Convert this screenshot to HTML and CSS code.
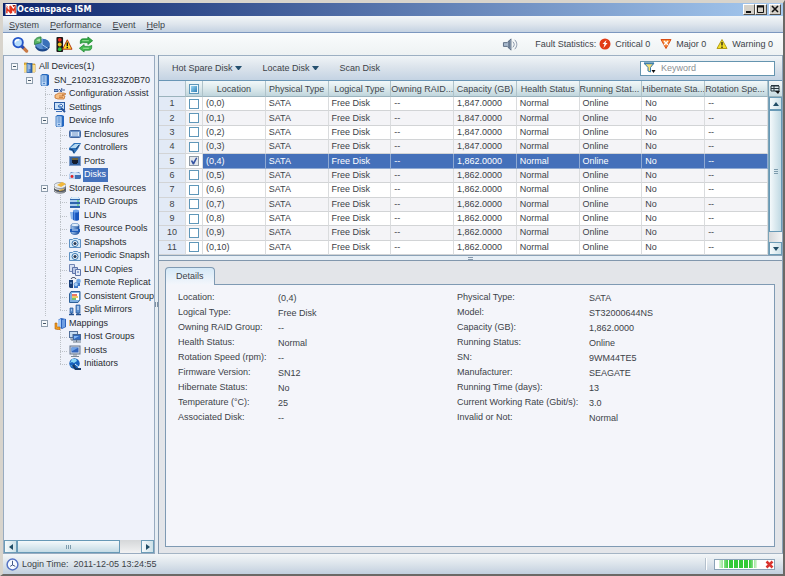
FILE: index.html
```html
<!DOCTYPE html>
<html lang="en">
<head>
<meta charset="utf-8">
<title>Oceanspace ISM</title>
<link rel="stylesheet" href="styles.css">
</head>
<body>
<svg class="sprite" aria-hidden="true">
  <defs>
    <linearGradient id="blue" x1="0" x2="1"><stop offset="0" stop-color="#a9cdf5"/><stop offset="1" stop-color="#1c4f9e"/></linearGradient>
    <linearGradient id="steel" x1="0" x2="1"><stop offset="0" stop-color="#fff"/><stop offset="1" stop-color="#7b8087"/></linearGradient>
  </defs>
  <symbol id="i-all" viewBox="0 0 12 12"><path d="M0 2h4l1 1h6v8H0z" fill="#f2c24d" stroke="#b98518" stroke-width=".7"/><path d="M0 4h11v7H0z" fill="#f9de8b"/><rect x="3" y="2.500" width="5" height="9" fill="url(#blue)" stroke="#2863ae" stroke-width=".8"/><path d="M4.500 5h2M4.500 7h2" stroke="#fff" stroke-width=".8"/></symbol>
  <symbol id="i-server" viewBox="0 0 12 12"><path d="M3 0h5l2 1v10l-2 1H3z" fill="#2467c2"/><path d="M2 1h6v11H3L2 11z" fill="#b9d5f5" stroke="#2a69b9" stroke-width=".8"/><path d="M3.500 3h3M3.500 5h3M3.500 7h3" stroke="#2a69b9" stroke-width=".8"/><circle cx="5" cy="9.500" r=".8" fill="#2a69b9"/></symbol>
  <symbol id="i-assist" viewBox="0 0 12 12"><path d="M0 1.500h4v2H0zM7 2h4M5 1l3 3M8 0l-2 4" fill="#9ab7df" stroke="#3c5e9c"/><path d="M1 7l4-2h5l2 1-4 1 3 1-1 3H4L1 10z" fill="#f7bf85" stroke="#bb651e" stroke-width=".7"/><path d="M5 8h4M5 9.500h4" stroke="#bb651e" stroke-width=".6"/></symbol>
  <symbol id="i-settings" viewBox="0 0 12 12"><rect x=".5" y="1.500" width="10" height="7" fill="#c7dff8" stroke="#285ba4"/><path d="M2 10.500h6M4 5l3-2 2 2-3 2z" fill="#fff" stroke="#3b6fb7"/><path d="M7 7l4 4" stroke="#25529b" stroke-width="2"/><circle cx="6" cy="6" r="1.500" fill="#5a91d1"/></symbol>
  <symbol id="i-enclosure" viewBox="0 0 12 12"><rect x=".5" y="2.500" width="11" height="7" rx="1" fill="#6f96cb" stroke="#41659f"/><rect x="2" y="4" width="8" height="4" fill="#dceafa"/><path d="M4 4v4M6 4v4M8 4v4" stroke="#7d9dca"/></symbol>
  <symbol id="i-controller" viewBox="0 0 12 12"><path d="M0 6l5-5 7 0-3 6-4 5-2-3-3-1z" fill="#2c71b9"/><path d="M1 6l5-4 5 0-4 4z" fill="#b4d9f3"/><path d="M1 7l3 1 1 3M7 7l3-4" fill="none" stroke="#163e76"/></symbol>
  <symbol id="i-port" viewBox="0 0 12 12"><rect x=".5" y="1.500" width="11" height="9" fill="#3563a3" stroke="#7d9bc6"/><path d="M3 3h6v5H8v1H4V8H3z" fill="#141c2d"/><path d="M4 3v2M6 3v2M8 3v2" stroke="#f0ce58" stroke-width=".8"/></symbol>
  <symbol id="i-disk" viewBox="0 0 12 12"><path d="M0 6l2-3h8l2 3v3l-1 1H1L0 9z" fill="#3f70b5"/><path d="M0 6c1-4 11-4 12 0z" fill="#d3e4f8"/><path d="M0 6h6v4H1L0 9z" fill="#b9d0ee"/><circle cx="3" cy="7.500" r="1.400" fill="#e51f24"/></symbol>
  <symbol id="i-storage" viewBox="0 0 12 12"><path d="M0 4v5c2 3 10 3 12 0V4z" fill="url(#steel)" stroke="#555b63" stroke-width=".7"/><path d="M0 6c3 3 9 3 12 0v2c-3 3-9 3-12 0z" fill="#555a61"/><ellipse cx="6" cy="3.500" rx="6" ry="3" fill="#e8edf2" stroke="#6f757d" stroke-width=".6"/><path d="M3 3l5-3 4 2-5 3z" fill="#f1b83b"/><path d="M5 8l5-1v1L5 9z" fill="#efb638"/></symbol>
  <symbol id="i-raid" viewBox="0 0 12 12"><path d="M1 3l2-2h6l2 2v9H1z" fill="#2d65ad"/><path d="M1 3l2-2h6l2 2z" fill="#d6eafa"/><path d="M1 4h10v2H1zM1 8h10v2H1z" fill="#a9cdef"/><path d="M8 5h2M8 9h2" stroke="#44d14c"/></symbol>
  <symbol id="i-lun" viewBox="0 0 12 12"><path d="M1 3h4v8l-3-1z" fill="#8db8eb"/><path d="M4 2v9c2 1 5 1 6 0V2z" fill="#1655bd"/><path d="M5.500 3v8" stroke="#4d89e0" stroke-width="1.500"/><ellipse cx="7" cy="2" rx="3" ry="1.500" fill="#6ca2e8"/></symbol>
  <symbol id="i-pool" viewBox="0 0 12 12"><path d="M2 2v8c2 2 6 2 8 0V2z" fill="url(#blue)" stroke="#2758a0" stroke-width=".7"/><ellipse cx="6" cy="2" rx="4" ry="1.600" fill="#e2effc" stroke="#4477b7" stroke-width=".6"/><path d="M1 6h10v3H1z" fill="#1e5cb9"/><path d="M3 7h6" stroke="#d7e8fc"/></symbol>
  <symbol id="i-snap" viewBox="0 0 12 12"><path d="M.5 2.500h3l1-1h4l1 1h2v8H.5z" fill="#d3e9f9" stroke="#5c90c3"/><circle cx="6" cy="6.500" r="3" fill="#fff" stroke="#3374ae"/><circle cx="6" cy="6.500" r="1.600" fill="#253a56"/></symbol>
  <symbol id="i-copy" viewBox="0 0 12 12"><path d="M.5.500h5v7h-5z" fill="#d6dff2" stroke="#7286b5"/><path d="M3.500 3.500h5v6h-5z" fill="#b9c7e6" stroke="#5d73a8"/><path d="M6.500 5.500h5v6h-5z" fill="#e5ebf8" stroke="#5d73a8"/><path d="M8 8h2" stroke="#4669aa"/></symbol>
  <symbol id="i-remote" viewBox="0 0 12 12"><path d="M0 3h4v8H1L0 10z" fill="#173e79"/><path d="M1 6h2" stroke="#95c4f5"/><path d="M2 2c1-2 4-2 5 0" fill="none" stroke="#222f4a"/><circle cx="9.500" cy="4" r="2.300" fill="#6da6e5"/><path d="M5 8h4v3H5zM9 6h2v3H9z" fill="#3e78c9"/><circle cx="7" cy="7.500" r="2" fill="#a4cff8" stroke="#3c76c2" stroke-width=".6"/></symbol>
  <symbol id="i-group" viewBox="0 0 12 12"><path d="M2 .5h9v8l-2 3H.5V3z" fill="#7eafe0" stroke="#2d6099"/><rect x="3" y="2" width="7" height="7" fill="#fff"/><path d="M3 4h5" stroke="#e34b35" stroke-width="1.500"/><path d="M3 6h6" stroke="#e9b72e" stroke-width="1.500"/><path d="M3 8h4" stroke="#46ae45" stroke-width="1.500"/></symbol>
  <symbol id="i-mirror" viewBox="0 0 12 12"><path d="M1 4h3v5H1zM7 1h4v8H7z" fill="#5f93d3" stroke="#275797" stroke-width=".7"/><path d="M8 3h2M8 5h2M2 6h1" stroke="#e6f2ff"/><path d="M0 10.500h5m2 0h5M2.500 9v2M9 9v2" stroke="#24518e" stroke-width="1.300"/></symbol>
  <symbol id="i-mapping" viewBox="0 0 12 12"><path d="M4 2l3-2 5 1v8l-4 2-4-2z" fill="#2a62bd"/><path d="M4 2l3-1v9L4 9z" fill="#a6cbf7"/><path d="M8 2l3-1v8L8 10z" fill="#6f9fe2"/><path d="M1 5h2v4h3v3l-5-1z" fill="#f09d20" stroke="#af5e08" stroke-width=".6"/></symbol>
  <symbol id="i-hosts" viewBox="0 0 12 12"><rect x=".5" y=".5" width="8" height="6" fill="#c6dcf2" stroke="#516f9a"/><rect x="4" y="3.500" width="7.500" height="5.500" fill="#326cc1" stroke="#45658f"/><path d="M5 5h5L5 8z" fill="#83b8f5"/><path d="M4 11h8M7.500 9v2M1 8h2v2" fill="none" stroke="#6b7887"/></symbol>
  <symbol id="i-host" viewBox="0 0 12 12"><rect x="1" y="1" width="10" height="8" fill="#d4dbe6" stroke="#64748d"/><rect x="2.500" y="2.500" width="7" height="5" fill="#3365bd"/><path d="M2.500 2.500h7l-7 4z" fill="#6fa2e6"/><path d="M4 10h4M2 11.500h8" stroke="#7c8795"/></symbol>
  <symbol id="i-initiator" viewBox="0 0 12 12"><circle cx="5.500" cy="5.500" r="5.200" fill="#1662be"/><path d="M3 1l4 0 1 2-3 2-2-1-2 1zM1 7l3 1 1 2z" fill="#8bd7f5"/><path d="M5 6l2 4h5v2H6L3 8z" fill="#173a66"/><path d="M6 6l5 4" stroke="#d9f3ff"/></symbol>
</svg>

<div class="window">
  <header class="titlebar">
    <svg class="logo" viewBox="0 0 12 12" aria-hidden="true"><path fill="#fff" d="M0 0h12v12H0z"/><path d="M1.500 10V5L5 9V2M6.500 10V4l2 3 2-3v6" fill="none" stroke="#e2341d" stroke-width="1.600"/><path d="M1 2l2 2M8 1l1 2 2-2" stroke="#e2341d"/></svg>
    <h1>Oceanspace ISM</h1>
    <div class="winbuttons">
      <button type="button" aria-label="Minimize"><svg viewBox="0 0 12 11"><path d="M3 8h5" stroke="#111" stroke-width="2"/></svg></button>
      <button type="button" aria-label="Maximize"><svg viewBox="0 0 12 11"><path d="M2.500 2v6.500h6V2M2 2h7" fill="none" stroke="#111"/><path d="M2 2.500h7" stroke="#111" stroke-width="2"/></svg></button>
      <button type="button" aria-label="Close"><svg viewBox="0 0 12 11"><path d="M3 2l6 6M9 2L3 8" stroke="#111" stroke-width="1.600"/></svg></button>
    </div>
  </header>

  <nav class="menubar">
    <button type="button"><u>S</u>ystem</button>
    <button type="button"><u>P</u>erformance</button>
    <button type="button"><u>E</u>vent</button>
    <button type="button"><u>H</u>elp</button>
  </nav>

  <div class="toolbar">
    <button type="button" aria-label="Discover"><svg viewBox="0 0 18 18"><path d="M10 10l6 6" stroke="#c97a45" stroke-width="3.500" stroke-linecap="round"/><path d="M10 10l3 3" stroke="#2a4bb0" stroke-width="3"/><circle cx="7" cy="7" r="5" fill="#b5dcfb" stroke="#2455c8" stroke-width="2"/><path d="M4 7c0-2 2-3 4-3" fill="none" stroke="#fff" stroke-width="1.500"/></svg></button>
    <button type="button" aria-label="Statistics"><svg viewBox="0 0 18 18"><path d="M2 8v4c2 6 13 6 15 0V8z" fill="#1b4689"/><ellipse cx="9.500" cy="8.500" rx="7.500" ry="5.500" fill="#5b90cf"/><path d="M9 9V3c5 0 8 3 8 5 0 4-4 6-7 6z" fill="#3a70b9"/><path d="M9 3v6l6 4" fill="none" stroke="#b5d7f5"/><path d="M1 6c0-3 3-5 7-5v6l-7 2z" fill="#56b365" stroke="#247839" stroke-width=".8"/><path d="M3 5c1-1 2-2 4-2v3z" fill="#a9dfa5"/></svg></button>
    <button type="button" aria-label="Alarms"><svg viewBox="0 0 18 18"><rect x="1" y="1" width="7" height="16" rx="1" fill="#1d1a19"/><circle cx="4.500" cy="4" r="2" fill="#ec2a20"/><circle cx="4.500" cy="9" r="2" fill="#efc11c"/><circle cx="4.500" cy="14" r="2" fill="#28c042"/><path d="M12.500 4l5 10h-10z" fill="#ffdc28" stroke="#b22f12" stroke-linejoin="round"/><path d="M12.500 7v3.500m0 1v1.500" stroke="#111" stroke-width="1.500"/></svg></button>
    <button type="button" aria-label="Refresh"><svg viewBox="0 0 18 18"><path d="M3 8V6c0-2 1-3 3-3h5V1l5 4-5 4V7H7c-1 0-2 0-4 1z" fill="#35aa45" stroke="#16832b" stroke-width=".8"/><path d="M15 10v2c0 2-1 3-3 3H7v2l-5-4 5-4v2h4c1 0 2 0 4-1z" fill="#45bd51" stroke="#16832b" stroke-width=".8"/><path d="M5 5h7M6 13h6" stroke="#a5e6a4"/></svg></button>
    <div class="faults">
      <svg class="sound" viewBox="0 0 16 16" aria-hidden="true"><path d="M1 6h4l4-4v12l-4-4H1z" fill="#a9bace" stroke="#58697f"/><path d="M7 4v8" stroke="#5a6b82" stroke-width="1.500"/><path d="M11 5c2 2 2 4 0 6M13 3c3 3 3 7 0 10" fill="none" stroke="#8290a4"/></svg>
      <span>Fault Statistics:</span>
      <svg class="fault" viewBox="0 0 12 12" aria-hidden="true"><circle cx="6" cy="6" r="5.500" fill="#e23b16"/><path d="M7.500 2L3.500 6h2L4.500 10l4-5h-2z" fill="#fff"/></svg>
      <span class="count">Critical 0</span>
      <svg class="fault" viewBox="0 0 12 12" aria-hidden="true"><path d="M1 1.500h10l-5 9z" fill="#f78a35" stroke="#d94d15" stroke-linejoin="round"/><path d="M4 3l4 4M8 3L4 7" stroke="#fff" stroke-width="1.400"/></svg>
      <span class="count">Major 0</span>
      <svg class="fault" viewBox="0 0 12 12" aria-hidden="true"><path d="M6 1.500l5 9H1z" fill="#f5e026" stroke="#b39d19" stroke-linejoin="round"/><path d="M6 4v3.500M6 8.500V10" stroke="#252311" stroke-width="1.300"/></svg>
      <span>Warning 0</span>
    </div>
  </div>

  <main class="workspace">
    <aside class="sidebar">
      <ul class="tree" id="tree"></ul>
      <div class="hscroll" aria-hidden="true">
        <span class="arrow"><svg viewBox="0 0 12 12"><path d="M8 3v6L4 6z"/></svg></span>
        <span class="hthumb"><i></i><i></i><i></i></span>
        <span class="arrow"><svg viewBox="0 0 12 12"><path d="M4 3v6l4-3z"/></svg></span>
      </div>
    </aside>
    <div class="vsplit"><i></i><i></i></div>
    <section class="content">
      <div class="actions">
        <button type="button">Hot Spare Disk<svg viewBox="0 0 7 4"><path d="M0 0h7L4 4H3z" fill="#25506f"/></svg></button>
        <button type="button">Locate Disk<svg viewBox="0 0 7 4"><path d="M0 0h7L4 4H3z" fill="#25506f"/></svg></button>
        <button type="button">Scan Disk</button>
        <label class="search">
          <svg viewBox="0 0 14 12" aria-hidden="true"><path d="M1 1h10L7.500 5.500V10L5 9V5.500z" fill="#f5df78" stroke="#397ba8"/><path d="M1 1.500h10" stroke="#3f7fab" stroke-width="1.500"/><path d="M8.500 8h4l-2 3z" fill="#111"/></svg>
          <input type="text" placeholder="Keyword" aria-label="Keyword">
        </label>
      </div>
      <div class="gridwrap">
        <table>
          <colgroup><col class="cnum"><col class="ccheck"><col><col><col><col><col><col><col><col><col></colgroup>
          <thead><tr><th></th><th class="all"><input type="checkbox" class="mixed" aria-label="Select all"></th><th>Location</th><th>Physical Type</th><th>Logical Type</th><th class="cut">Owning RAID...</th><th>Capacity (GB)</th><th>Health Status</th><th class="cut">Running Stat...</th><th class="cut">Hibernate Sta...</th><th class="cut">Rotation Spe...</th></tr></thead>
          <tbody id="disks"></tbody>
        </table>
        <div class="vscroll">
          <button type="button" class="columns" aria-label="Columns"><svg viewBox="0 0 12 12"><path d="M2 3h8v5H2zM2 5.500h8M5 3v5M2 2.500h8" fill="none" stroke="#27363f"/><path d="M6 8h5l-2 3z" fill="#111"/></svg></button>
          <span class="arrow"><svg viewBox="0 0 12 12"><path d="M3 8h6L6 4z"/></svg></span>
          <span class="vthumb"><i></i><i></i><i></i></span>
          <span class="vtrack"></span>
          <span class="arrow"><svg viewBox="0 0 12 12"><path d="M3 4h6L6 8z"/></svg></span>
        </div>
      </div>
      <div class="hsplit"><i></i><i></i></div>
      <div class="details">
        <button type="button" class="tab">Details</button>
        <div class="sheet">
          <dl>
            <dt>Location:</dt><dd>(0,4)</dd>
            <dt>Logical Type:</dt><dd>Free Disk</dd>
            <dt>Owning RAID Group:</dt><dd>--</dd>
            <dt>Health Status:</dt><dd>Normal</dd>
            <dt>Rotation Speed (rpm):</dt><dd>--</dd>
            <dt>Firmware Version:</dt><dd>SN12</dd>
            <dt>Hibernate Status:</dt><dd>No</dd>
            <dt>Temperature (°C):</dt><dd>25</dd>
            <dt>Associated Disk:</dt><dd>--</dd>
          </dl>
          <dl class="wide">
            <dt>Physical Type:</dt><dd>SATA</dd>
            <dt>Model:</dt><dd>ST32000644NS</dd>
            <dt>Capacity (GB):</dt><dd>1,862.0000</dd>
            <dt>Running Status:</dt><dd>Online</dd>
            <dt>SN:</dt><dd>9WM44TE5</dd>
            <dt>Manufacturer:</dt><dd>SEAGATE</dd>
            <dt>Running Time (days):</dt><dd>13</dd>
            <dt>Current Working Rate (Gbit/s):</dt><dd>3.0</dd>
            <dt>Invalid or Not:</dt><dd>Normal</dd>
          </dl>
        </div>
      </div>
    </section>
  </main>

  <footer class="status">
    <svg class="clock" viewBox="0 0 14 14" aria-hidden="true"><circle cx="7" cy="7" r="5.800" fill="#f6faff" stroke="#5573c4" stroke-width="1.600"/><path d="M7 3v4.500L4.500 9M7 7.500l3 1.500" fill="none" stroke="#334a7c"/></svg>
    <span>Login Time:</span><span class="time">2011-12-05 13:24:55</span>
    <span class="divider"></span>
    <div class="progress"><span class="blocks"></span><svg viewBox="0 0 9 9"><path d="M1.500 1.500l6 6M7.500 1.500l-6 6" stroke="#d9332e" stroke-width="2.500"/></svg></div>
  </footer>
</div>
<script src="script.js"></script>
</body>
</html>
```
FILE: styles.css
```css
* { box-sizing: border-box; }
html, body { height: 100%; }
body { margin: 0; font: 9px/13px "Liberation Sans", Arial, sans-serif; color: #3c4248; background: #d8d4cc; }
button { font: inherit; color: inherit; background: none; border: 0; padding: 0; margin: 0; display: flex; align-items: center; }
h1, ul, dl, dd { margin: 0; padding: 0; }
svg { display: block; flex: none; }
.sprite { position: absolute; width: 0; height: 0; }

.window { height: 100vh; display: flex; flex-direction: column; border: 3px solid #d8d4cc; border-right: 2px solid #6b6966; border-bottom: 2px solid #6b6966; background: #f4f7f8; }

.titlebar { flex: none; height: 13px; display: flex; align-items: center; background: linear-gradient(90deg, #0c246c, #a6caf0); padding: 0 2px; }
.logo { width: 12px; height: 11px; }
.titlebar h1 { flex: 1; font: bold 9px/13px "DejaVu Sans Condensed", "DejaVu Sans", sans-serif; color: #fff; }
.winbuttons { display: flex; }
.winbuttons button { width: 12px; height: 11px; background: #d5d1c9; border: 1px solid #fff; border-right-color: #55524d; border-bottom-color: #55524d; }
.winbuttons button:last-child { margin-left: 2px; }
.winbuttons svg { width: 12px; height: 11px; margin: -1px; }

.menubar { flex: none; height: 17px; display: flex; align-items: center; gap: 11px; padding: 2px 6px 0; background: linear-gradient(#f3f6f8, #dfe6ed 50%, #c4d2e2); border-bottom: 1px solid #7c97bf; }
.menubar button { display: block; }

.toolbar { flex: none; height: 22px; display: flex; align-items: center; gap: 4px; padding: 0 10px 0 8px; background: linear-gradient(#fafcfd, #eef2f3); }
.toolbar button svg { width: 18px; height: 17px; }
.faults { display: flex; align-items: center; margin-left: auto; }
.sound { width: 16px; height: 15px; margin-right: 17px; }
.fault { width: 12px; height: 12px; margin: 0 4px 0 3px; }
.count { margin-right: 7px; }

.workspace { flex: 1; min-height: 0; display: flex; background: #eaf0f5; }

.sidebar { flex: none; width: 152px; display: flex; flex-direction: column; border: 1px solid #98abc0; background: #eff2fa; }
.tree { list-style: none; height: 311px; margin-top: 4px; padding-left: 3px; display: grid; grid-auto-rows: 1fr; overflow: hidden; color: #272b30; }
.tree li { display: flex; align-items: stretch; white-space: nowrap; min-height: 0; }
.slot { flex: none; width: 15px; }
.slot.line { background: repeating-linear-gradient(#bcc1c7 0 1px, transparent 1px 2px) 8px 0 / 1px 100% no-repeat; }
.slot.tee { background: repeating-linear-gradient(#bcc1c7 0 1px, transparent 1px 2px) 8px 0 / 1px 100% no-repeat, repeating-linear-gradient(90deg, #bcc1c7 0 1px, transparent 1px 2px) 8px 7px / 7px 1px no-repeat; }
.slot.elbow { background: repeating-linear-gradient(#bcc1c7 0 1px, transparent 1px 2px) 8px 0 / 1px 7px no-repeat, repeating-linear-gradient(90deg, #bcc1c7 0 1px, transparent 1px 2px) 8px 7px / 7px 1px no-repeat; }
.slot.open { display: flex; align-items: center; justify-content: center; }
.box { width: 7px; height: 7px; border: 1px solid #8e9dac; background: linear-gradient(#465768, #465768) 1px 2px / 3px 1px no-repeat #f7f9fb; }
.icon { flex: none; width: 15px; display: flex; align-items: center; justify-content: center; }
.icon svg { width: 12px; height: 12px; }
.label { margin-left: 1px; padding: 0 1px; }
.label.selected { padding-right: 2px; background: #4472bd; color: #fff; }

.hscroll { margin-top: auto; height: 13px; display: flex; background: linear-gradient(#d5d7d9, #f1f2f3); }
.arrow { flex: none; width: 13px; height: 13px; border: 1px solid #6c9cb7; background: linear-gradient(90deg, #f5fafc, #cde1e8); display: flex; align-items: center; justify-content: center; }
.arrow svg { width: 12px; height: 12px; fill: #204d66; }
.hthumb { flex: none; width: 103px; margin-right: auto; border: 1px solid #6799b6; background: linear-gradient(#f4f9fb, #c4dbe5); display: flex; align-items: center; justify-content: center; gap: 1px; }
.hthumb i { width: 1px; height: 4px; background: #7d9cad; }

.vsplit { flex: none; width: 4px; display: flex; align-items: center; justify-content: center; gap: 1px; border-right: 1px solid #8499af; background: #e6edf3; }
.vsplit i { width: 1px; height: 5px; background: #7d8fa2; }

.content { flex: 1; min-width: 0; display: flex; flex-direction: column; border-right: 1px solid #8ba3b8; border-bottom: 1px solid #a4b4c4; }
.actions { flex: none; height: 26px; display: flex; align-items: center; gap: 21px; padding: 0 7px 0 13px; border-top: 1px solid #9db0c3; border-bottom: 1px solid #6996b6; background: linear-gradient(#f0f4f7, #dce4ec 45%, #c4d3e3); }
.actions button svg { width: 7px; height: 4px; margin-left: 2px; }
.search { margin-left: auto; display: flex; align-items: center; width: 135px; height: 15px; padding-left: 2px; border: 1px solid #6594af; background: #fff; }
.search svg { width: 14px; height: 12px; }
.search input { flex: 1; min-width: 0; height: 13px; border: 0; padding: 0 4px; background: none; font: inherit; color: #3c4248; outline: 0; }
.search input::placeholder { color: #8a8e92; opacity: 1; }

.gridwrap { flex: none; height: 175px; overflow: hidden; display: flex; border-bottom: 1px solid #8ba2b7; background: #fff; }
table { flex: 1; width: 100%; height: 174px; table-layout: fixed; border-collapse: separate; border-spacing: 0; }
.cnum { width: 27px; }
.ccheck { width: 17px; }
th { height: 16px; padding: 1px 0 0; font-weight: normal; white-space: nowrap; overflow: hidden; line-height: 13px; color: #3f474d; background: linear-gradient(#f2f8f9, #dce9ec 50%, #c0d6dd); border-right: 1px solid #afc3ca; border-bottom: 1px solid #9bb3bd; }
th:first-child { background: #e3ebf6; }
th.cut { text-align: left; }
td { padding: 0 0 0 3px; line-height: 11px; white-space: nowrap; overflow: hidden; border-right: 1px solid #dadcde; border-bottom: 1px solid #d2d4d6; }
tbody tr:nth-child(even) td { background: #f4f4f7; }
tbody td.num, tbody tr:nth-child(even) td.num { text-align: center; background: #e2eaf6; padding: 0; }
td.check, th.all { padding: 0; text-align: center; }
tbody tr.current td:nth-child(n+3) { background: #4470ba; color: #fff; border-color: #8ea9d2; }
input[type="checkbox"] { appearance: none; display: block; width: 10px; height: 10px; margin: 0 auto; border: 1px solid #5f97b9; background: #fff; }
input[type="checkbox"]:checked { border-color: #8d99a5; background: #e4e7ec; }
input[type="checkbox"]:checked::after { content: ""; display: block; width: 8px; height: 8px; background: #3553a2; clip-path: polygon(10% 45%, 28% 38%, 42% 62%, 75% 5%, 92% 12%, 50% 92%, 35% 92%); }
input.mixed { background: linear-gradient(135deg, #9fd8f3, #2c7eb6) 1px 1px / 6px 6px no-repeat #eef8fc; }

.vscroll { flex: none; width: 14px; display: flex; flex-direction: column; border-left: 1px solid #7ca3b8; }
.columns { height: 16px; background: linear-gradient(#f2f8f9, #c8dce2); border-bottom: 1px solid #9bb3bd; }
.columns svg { width: 12px; height: 12px; }
.vthumb { height: 122px; border: 1px solid #6799b6; background: linear-gradient(90deg, #f4f9fb, #c0d9e3); display: flex; flex-direction: column; align-items: center; justify-content: center; gap: 1px; }
.vthumb i { width: 4px; height: 1px; background: #7d9cad; }
.vtrack { flex: 1; background: linear-gradient(90deg, #d6d8da, #f3f4f5); }

.hsplit { flex: none; height: 5px; display: flex; flex-direction: column; align-items: center; justify-content: center; gap: 1px; border-bottom: 1px solid #8197ad; background: #e7eff6; }
.hsplit i { width: 5px; height: 1px; background: #8799ab; }

.details { flex: 1; min-height: 0; display: flex; flex-direction: column; padding: 6px 7px 6px 6px; background: #e3e5e9; }
.tab { position: relative; z-index: 1; align-self: flex-start; height: 18px; padding: 0 10px; margin-bottom: -1px; border: 1px solid #7f9ab3; border-bottom: 0; border-radius: 4px 4px 0 0; background: linear-gradient(#d5e9f7, #f4f6fb); }
.sheet { flex: 1; display: grid; grid-template-columns: 279px 1fr; align-content: start; padding: 6px 12px; border: 1px solid #7f9ab3; background: #f4f5fa; }
dl { display: grid; grid-template-columns: 100px 1fr; grid-auto-rows: 15px; }
dl.wide { grid-template-columns: 132px 1fr; }
dt, dd { line-height: 13px; white-space: nowrap; }
dd { line-height: 15px; }

.status { flex: none; height: 20px; display: flex; align-items: center; padding: 0 8px 0 3px; background: linear-gradient(#f3f6f8, #dce4eb 50%, #c2cfde); }
.clock { width: 13px; height: 13px; margin-right: 3px; }
.time { margin-left: 5px; }
.divider { margin-left: auto; width: 2px; height: 12px; margin-right: 7px; border-left: 1px solid #b4c0cc; border-right: 1px solid #fff; }
.progress { width: 61px; height: 11px; display: flex; align-items: center; justify-content: flex-end; gap: 8px; border: 1px solid #8ba3b8; background: #fff; }
.blocks { width: 38px; height: 8px; background: repeating-linear-gradient(90deg, transparent 0 4px, #fff 4px 5px), linear-gradient(90deg, #dff7dc, #32c936 25% 80%, #dff7dc); }
.progress svg { width: 9px; height: 9px; }
```
FILE: script.js
```js
// Device tree: icon, label, guide slots to the left of the icon.
const nodes = [
  ["all", "All Devices(1)", ["open"]],
  ["server", "SN_210231G323Z0B70", ["", "open"]],
  ["assist", "Configuration Assist", ["", "", "tee"]],
  ["settings", "Settings", ["", "", "tee"]],
  ["server", "Device Info", ["", "", "open"]],
  ["enclosure", "Enclosures", ["", "", "line", "tee"]],
  ["controller", "Controllers", ["", "", "line", "tee"]],
  ["port", "Ports", ["", "", "line", "tee"]],
  ["disk", "Disks", ["", "", "line", "elbow"]],
  ["storage", "Storage Resources", ["", "", "open"]],
  ["raid", "RAID Groups", ["", "", "line", "tee"]],
  ["lun", "LUNs", ["", "", "line", "tee"]],
  ["pool", "Resource Pools", ["", "", "line", "tee"]],
  ["snap", "Snapshots", ["", "", "line", "tee"]],
  ["snap", "Periodic Snapsh", ["", "", "line", "tee"]],
  ["copy", "LUN Copies", ["", "", "line", "tee"]],
  ["remote", "Remote Replicat", ["", "", "line", "tee"]],
  ["group", "Consistent Group", ["", "", "line", "tee"]],
  ["mirror", "Split Mirrors", ["", "", "line", "elbow"]],
  ["mapping", "Mappings", ["", "", "open"]],
  ["hosts", "Host Groups", ["", "", "", "tee"]],
  ["host", "Hosts", ["", "", "", "tee"]],
  ["initiator", "Initiators", ["", "", "", "elbow"]]
];

document.getElementById("tree").innerHTML = nodes.map(([icon, label, slots]) =>
  `<li>${slots.map(s => `<span class="slot ${s}">${s === "open" ? '<span class="box"></span>' : ""}</span>`).join("")}` +
  `<span class="icon"><svg aria-hidden="true"><use href="#i-${icon}"/></svg></span>` +
  `<span class="label${label === "Disks" ? " selected" : ""}">${label}</span></li>`).join("");

const capacities = ["1,847.0000", "1,847.0000", "1,847.0000", "1,847.0000"];
document.getElementById("disks").innerHTML = Array.from({ length: 11 }, (_, i) => {
  const current = i === 4;
  const cells = [`(0,${i})`, "SATA", "Free Disk", "--", capacities[i] || "1,862.0000", "Normal", "Online", "No", "--"];
  return `<tr${current ? ' class="current"' : ""}><td class="num">${i + 1}</td>` +
    `<td class="check"><input type="checkbox" aria-label="Select disk ${i + 1}"${current ? " checked" : ""}></td>` +
    cells.map(c => `<td>${c}</td>`).join("") + "</tr>";
}).join("");
```
